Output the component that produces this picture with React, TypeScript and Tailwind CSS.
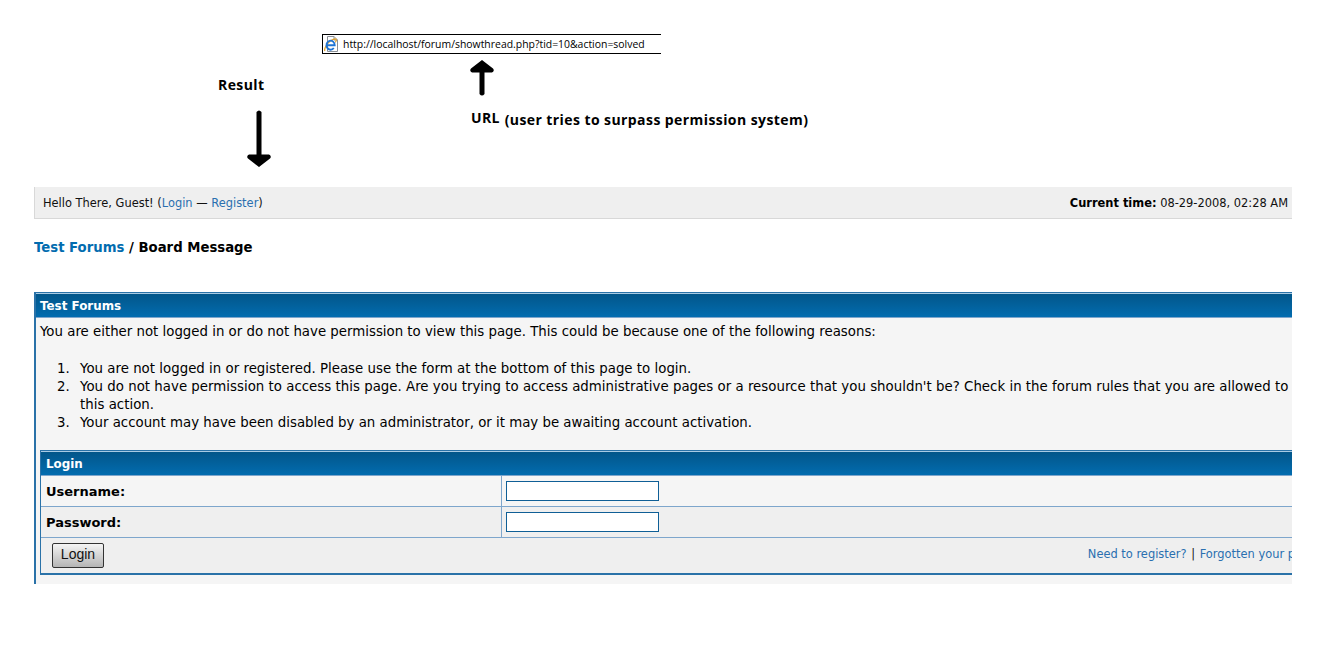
const verdana = "font-['DejaVu_Sans','Verdana',sans-serif]";

function IeIcon() {
  return (
    <svg width="16" height="16" viewBox="0 0 16 16" className="shrink-0">
      <path d="M4.500 .5H11L14.500 4V15.500H4.500Z" fill="#fff" stroke="#8a8f96" />
      <path d="M11 .5V4H14.500" fill="#dfe4e9" stroke="#8a8f96" />
      <path d="M1.800 15C.8 13 4 7 8 4.500C10.500 3 12.800 2.500 13.300 3.500C13.700 4.500 13 5.500 12.200 6.500" fill="none" stroke="#e3a32a" strokeWidth="1.2" />
      <path d="M3.500 9.300H11.700A4.100 4.500 0 1 0 10.800 12" fill="none" stroke="#1f74d4" strokeWidth="1.900" />
    </svg>
  );
}

function ThickArrow({ down, h }: { down?: boolean; h: number }) {
  return (
    <svg width="26" height={h} viewBox={`0 0 26 ${h}`} className="block">
      <g transform={down ? `translate(0 ${h}) scale(1 -1)` : undefined}>
        <path d={`M13 1L24 9.500Q26 12 23 13.500H15.500V${h - 2}Q13 ${h + 1} 10.500 ${h - 2}V13.500H3Q0 12 2 9.500Z`} fill="#000" />
      </g>
    </svg>
  );
}

function ThinHeader({ inset, children }: { inset?: boolean; children: string }) {
  return (
    <div className={`h-[24px] border-b border-[#7ea6cc] bg-gradient-to-b from-[#02568a] to-[#026caf] text-[11.900px] leading-[24px] font-bold text-white ${inset ? "pl-[5px]" : "pl-[4px]"}`}>
      {children}
    </div>
  );
}

const items = [
  "You are not logged in or registered. Please use the form at the bottom of this page to login.",
  "You do not have permission to access this page. Are you trying to access administrative pages or a resource that you shouldn't be? Check in the forum rules that you are allowed to perform this action.",
  "Your account may have been disabled by an administrator, or it may be awaiting account activation.",
];

export default function App() {
  return (
    <div className={`h-[668px] w-[1334px] overflow-hidden bg-white text-black ${verdana}`}>
      <div className="flex h-[187px]">
        <div className="ml-[218px] w-[104px] pt-[75px]">
          <div className="font-['Open_Sans',sans-serif] text-[14px] leading-[19px] font-bold tracking-[0.4px]">Result</div>
          <div className="mt-[16px] ml-[28px]"><ThickArrow down h={58} /></div>
        </div>
        <div className="pt-[34px]">
          <div className="flex h-[20px] w-[339px] items-center gap-[4px] border-y border-l border-black bg-white font-['Open_Sans',sans-serif] text-[10.430px] leading-[18px]">
            <IeIcon />
            <span>http://localhost/forum/showthread.php?tid=10&amp;action=solved</span>
          </div>
          <div className="mt-[5px] ml-[147px]"><ThickArrow h={37} /></div>
          <div className="mt-[12px] ml-[149px] flex items-start gap-[5px] font-['Open_Sans',sans-serif] font-bold whitespace-nowrap">
            <span className="text-[14px] leading-[19px] tracking-[0.3px]">URL</span>
            <span className="pt-[2px] text-[14px] leading-[19px] tracking-[0.42px]">(user tries to surpass permission system)</span>
          </div>
        </div>
      </div>

      <div className="ml-[34px] w-[1258px] overflow-hidden">
        <div className="flex h-[32px] items-center justify-between border-b border-l border-[#d8d8d8] bg-[#efefef] pt-[3px] pr-[4px] pl-[8px] text-[11.430px] text-[#111]">
          <div>
            Hello There, Guest! (<a className="text-[#2a6fb0]">Login</a> — <a className="text-[#2a6fb0]">Register</a>)
          </div>
          <div><b className="text-black">Current time:</b> 08-29-2008, 02:28 AM</div>
        </div>

        <div className="mt-[20px] text-[13.250px] leading-[18px] font-bold">
          <a className="text-[#026caf]">Test Forums</a> / Board Message
        </div>

        <div className="mt-[35px] h-[292px] w-[1340px] border-t border-l-2 border-[#2a72a8] bg-[#f5f5f5]">
          <div className="border-t border-[#a9cbe4]">
            <ThinHeader>Test Forums</ThinHeader>
          </div>
          <div className="px-[4px] pt-[5px] text-[13.330px] leading-[18px]">
            <p>You are either not logged in or do not have permission to view this page. This could be because one of the following reasons:</p>
            <ol className="mt-[19px]">
              {items.map((t, i) => (
                <li key={i} className="flex">
                  <span className="w-[40px] shrink-0 pl-[17px]">{i + 1}.</span>
                  <span className={i < 2 ? "tracking-[0.018px]" : "tracking-normal"}>{t}</span>
                </li>
              ))}
            </ol>
          </div>
          <div className="mx-[4px] mt-[18px] border border-b-2 border-[#2a72a8]">
            <div className="border-t border-[#a9cbe4]">
              <ThinHeader inset>Login</ThinHeader>
            </div>
            <div className="flex h-[31px] border-b border-[#7ea6cc] bg-[#f5f5f5]">
              <div className="w-[461px] border-r border-[#7ea6cc] pl-[5px] text-[13px] leading-[32px] font-bold">Username:</div>
              <div className="pt-[5px] pl-[4px]"><input className="block h-[20px] w-[153px] border border-[#0f5f96] bg-white" /></div>
            </div>
            <div className="flex h-[31px] border-b border-[#7ea6cc] bg-[#efefef]">
              <div className="w-[461px] border-r border-[#7ea6cc] pl-[5px] text-[13px] leading-[32px] font-bold">Password:</div>
              <div className="pt-[5px] pl-[4px]"><input type="password" className="block h-[20px] w-[153px] border border-[#0f5f96] bg-white" /></div>
            </div>
            <div className="flex h-[35px] items-center justify-between bg-[#efefef] pr-[21px] pl-[11px]">
              <button className="h-[25px] w-[52px] rounded-[2px] border border-[#333] bg-gradient-to-b from-[#f5f5f5] to-[#b5b5b5] pb-[3px] font-['Liberation_Sans',sans-serif] text-[14px] leading-[20px] text-[#111]">Login</button>
              <div className="pb-[2px] text-[11.430px] text-[#111]">
                <a className="text-[#2a6fb0]">Need to register?</a><span className="mx-[1px]"> | </span><a className="text-[#2a6fb0]">Forgotten your password?</a>
              </div>
            </div>
          </div>
        </div>
      </div>
    </div>
  );
}
